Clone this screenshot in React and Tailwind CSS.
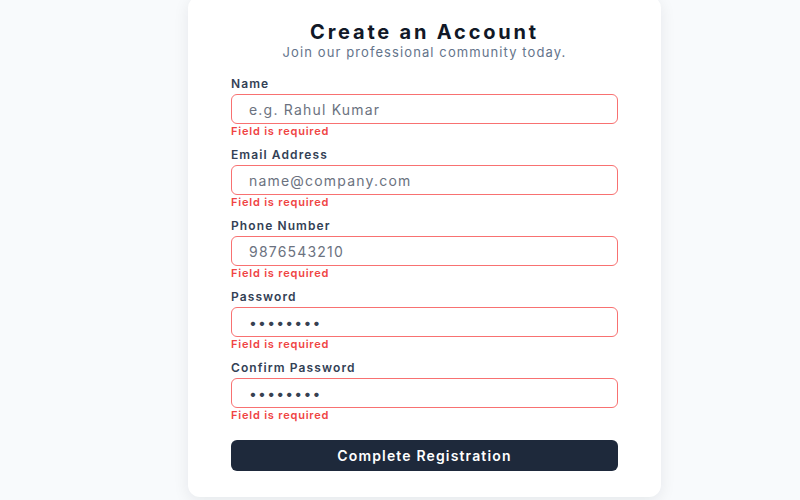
import React from "react";

const fields = [
  { label: "Name", placeholder: "e.g. Rahul Kumar", dots: false },
  { label: "Email Address", placeholder: "name@company.com", dots: false },
  { label: "Phone Number", placeholder: "9876543210", dots: false },
  { label: "Password", placeholder: "••••••••", dots: true },
  { label: "Confirm Password", placeholder: "••••••••", dots: true },
];

export default function App() {
  return (
    <div className="min-h-[500px] w-full overflow-hidden bg-[#f8fafc] font-['Inter',sans-serif]">
      <div className="ml-[188px] -mt-1 w-[473px] rounded-xl bg-white px-[43px] pt-[26px] pb-[26px] shadow-[0_4px_16px_rgba(15,23,42,0.08)]">
        <h1 className="text-center text-[20px] leading-[20px] font-bold tracking-[2.8px] text-[#111827]">
          Create an Account
        </h1>
        <p className="text-center text-[13px] leading-[20px] tracking-[1.1px] text-[#64748b]">
          Join our professional community today.
        </p>
        <form className="mt-[14px] flex flex-col gap-[9px]" onSubmit={(e) => e.preventDefault()}>
          {fields.map((f) => (
            <div key={f.label} className="flex flex-col">
              <label className="text-[12px] leading-[16px] font-semibold tracking-[1.1px] text-[#334155]">
                {f.label}
              </label>
              <input
                type="text"
                placeholder={f.placeholder}
                className={
                  f.dots
                    ? "mt-[2px] h-[30px] w-full rounded-md border-[1.5px] border-[#f87171] bg-white px-[17px] text-[14px] tracking-[1.2px] text-[#374151] outline-none placeholder:text-[#374151]"
                    : "mt-[2px] h-[30px] w-full rounded-md border-[1.5px] border-[#f87171] bg-white px-[17px] text-[14px] tracking-[1.2px] text-[#374151] outline-none placeholder:text-[#6b7280]"
                }
              />
              <span className="text-[11px] leading-[14px] font-semibold tracking-[0.8px] text-[#ef4444]">
                Field is required
              </span>
            </div>
          ))}
          <button
            type="submit"
            className="mt-[9px] h-[31px] w-full rounded-md bg-[#1e293b] text-[14px] font-semibold tracking-[1.15px] text-white"
          >
            Complete Registration
          </button>
        </form>
      </div>
    </div>
  );
}
